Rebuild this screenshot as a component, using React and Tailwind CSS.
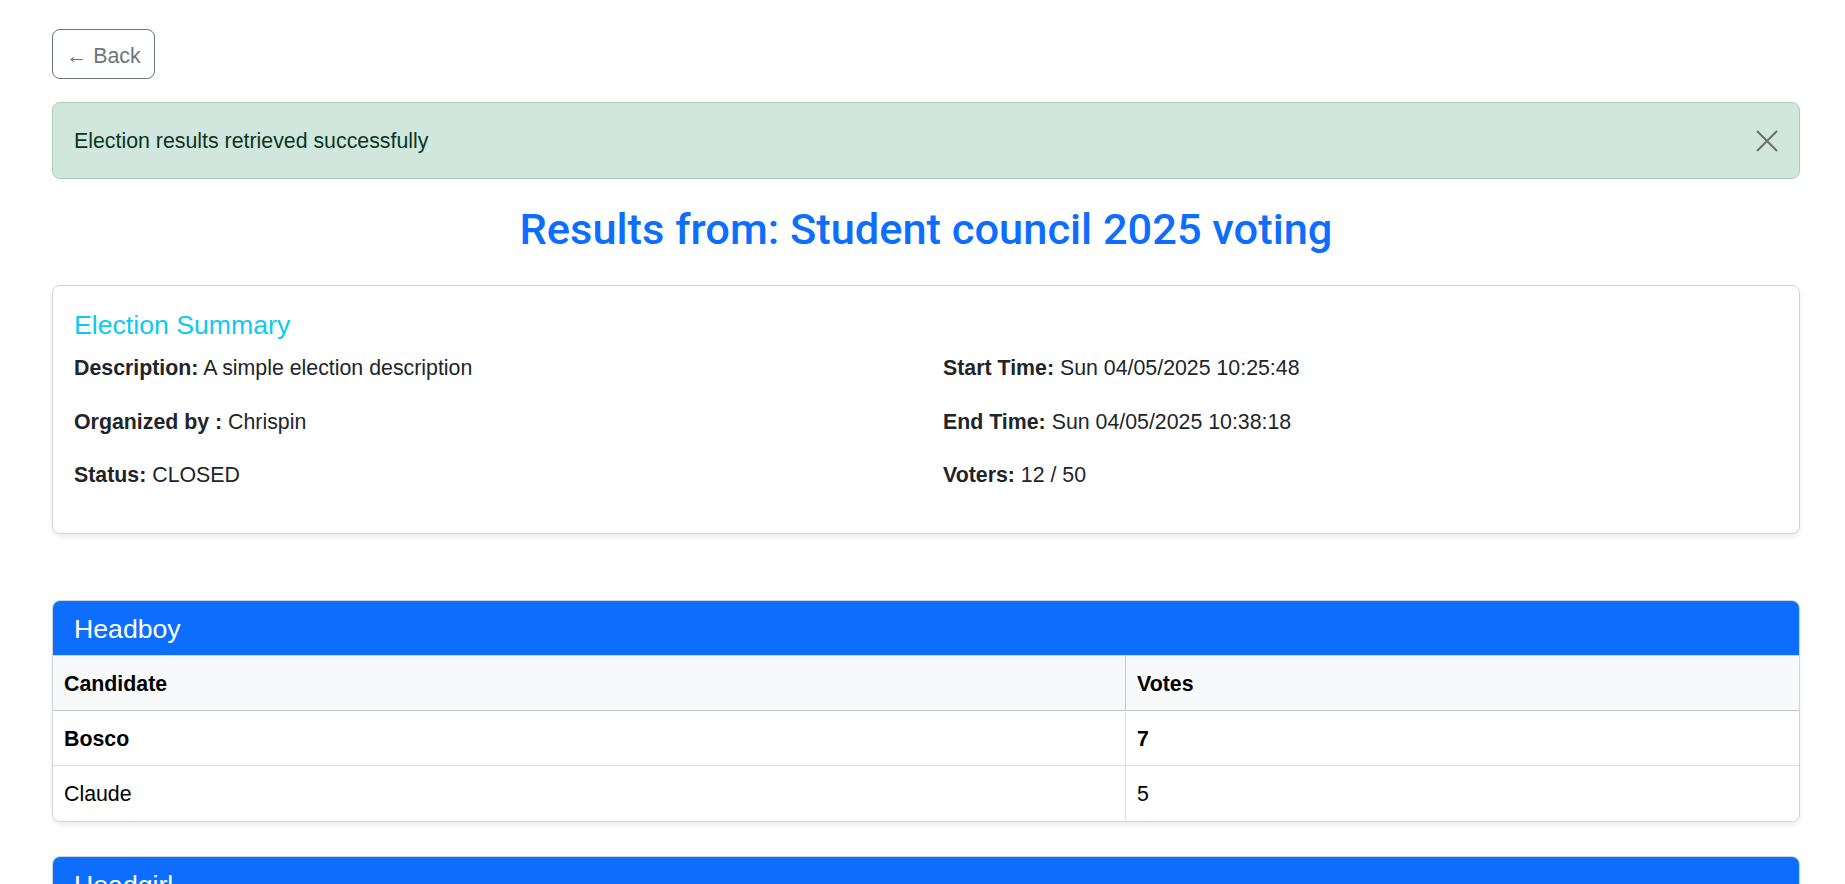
function ResultCard({ title, rows }) {
  return (
    <div className="rounded-[8px] border border-[#d3d4d5] bg-white shadow-[0_3px_5px_rgba(0,0,0,0.075)] overflow-hidden">
      <div className="h-[55px] bg-[#0d6efd] border-b border-[#d3d4d5] flex items-center px-[21px] pt-[2px]">
        <h5 className="text-[26.67px] leading-[32px] text-white">{title}</h5>
      </div>
      {rows.length > 0 && (
        <div className="flex h-[55px] bg-[#f8f9fa] border-b border-[#c6c7c8] text-black font-bold">
          <div className="w-[1073px] shrink-0 border-r border-[#c6c7c8] flex items-center px-[11px] pt-[3px]">Candidate</div>
          <div className="flex-1 flex items-center px-[11px] pt-[3px]">Votes</div>
        </div>
      )}
      {rows.map((r, i) => (
        <div
          key={r.name}
          className={`flex h-[55px] bg-white text-black ${i < rows.length - 1 ? 'border-b border-[#dee2e6]' : ''} ${r.win ? 'font-bold' : ''}`}
        >
          <div className="w-[1073px] shrink-0 border-r border-[#dee2e6] flex items-center px-[11px] pt-[3px]">{r.name}</div>
          <div className="flex-1 flex items-center px-[11px] pt-[3px]">{r.votes}</div>
        </div>
      ))}
    </div>
  );
}

function Field({ label, value }) {
  return (
    <p className="leading-[32px] mb-[21.5px]">
      <span className="font-bold">{label}</span> {value}
    </p>
  );
}

export default function App() {
  return (
    <div
      className="min-h-screen bg-white pl-[52px] pr-[45px] pt-[29px] pb-10 text-[21.33px] text-[#212529]"
      style={{ fontFamily: '"Liberation Sans", Arial, sans-serif' }}
    >
      <button className="h-[50px] px-[13px] pt-[3px] rounded-[8px] border border-[#6c757d] text-[#6c757d] text-[21.33px] leading-[32px] bg-white">
        ← Back
      </button>

      <div className="mt-[23px] h-[77px] rounded-[8px] border border-[#a3cfbb] bg-[#d1e7dd] text-[#0a3622] flex items-center justify-between pl-[21px] pr-[21px]">
        <span className="pt-[2px]">Election results retrieved successfully</span>
        <svg width="22" height="22" viewBox="0 0 22 22" className="opacity-50">
          <path d="M1 1 L21 21 M21 1 L1 21" stroke="#000" strokeWidth="2" fill="none" />
        </svg>
      </div>

      <h2
        className="mt-[24px] text-center text-[43.4px] leading-[53px] font-medium text-[#0d6efd]"
        style={{ fontFamily: 'Roboto, "Liberation Sans", sans-serif' }}
      >
        Results from: Student council 2025 voting
      </h2>

      <div className="mt-[29px] h-[249px] rounded-[8px] border border-[#d3d4d5] bg-white shadow-[0_3px_5px_rgba(0,0,0,0.075)] px-[21px] pt-[23px] pb-[19px]">
        <h5 className="text-[26.67px] leading-[32px] text-[#0dcaf0] mb-[11px]">Election Summary</h5>
        <div className="grid grid-cols-[869px_1fr]">
          <div>
            <Field label="Description:" value="A simple election description" />
            <Field label="Organized by :" value="Chrispin" />
            <Field label="Status:" value="CLOSED" />
          </div>
          <div>
            <Field label="Start Time:" value="Sun 04/05/2025 10:25:48" />
            <Field label="End Time:" value="Sun 04/05/2025 10:38:18" />
            <Field label="Voters:" value="12 / 50" />
          </div>
        </div>
      </div>

      <div className="mt-[66px]">
        <ResultCard
          title="Headboy"
          rows={[
            { name: 'Bosco', votes: '7', win: true },
            { name: 'Claude', votes: '5', win: false },
          ]}
        />
      </div>

      <div className="mt-[34px]">
        <ResultCard title="Headgirl" rows={[]} />
      </div>
    </div>
  );
}
